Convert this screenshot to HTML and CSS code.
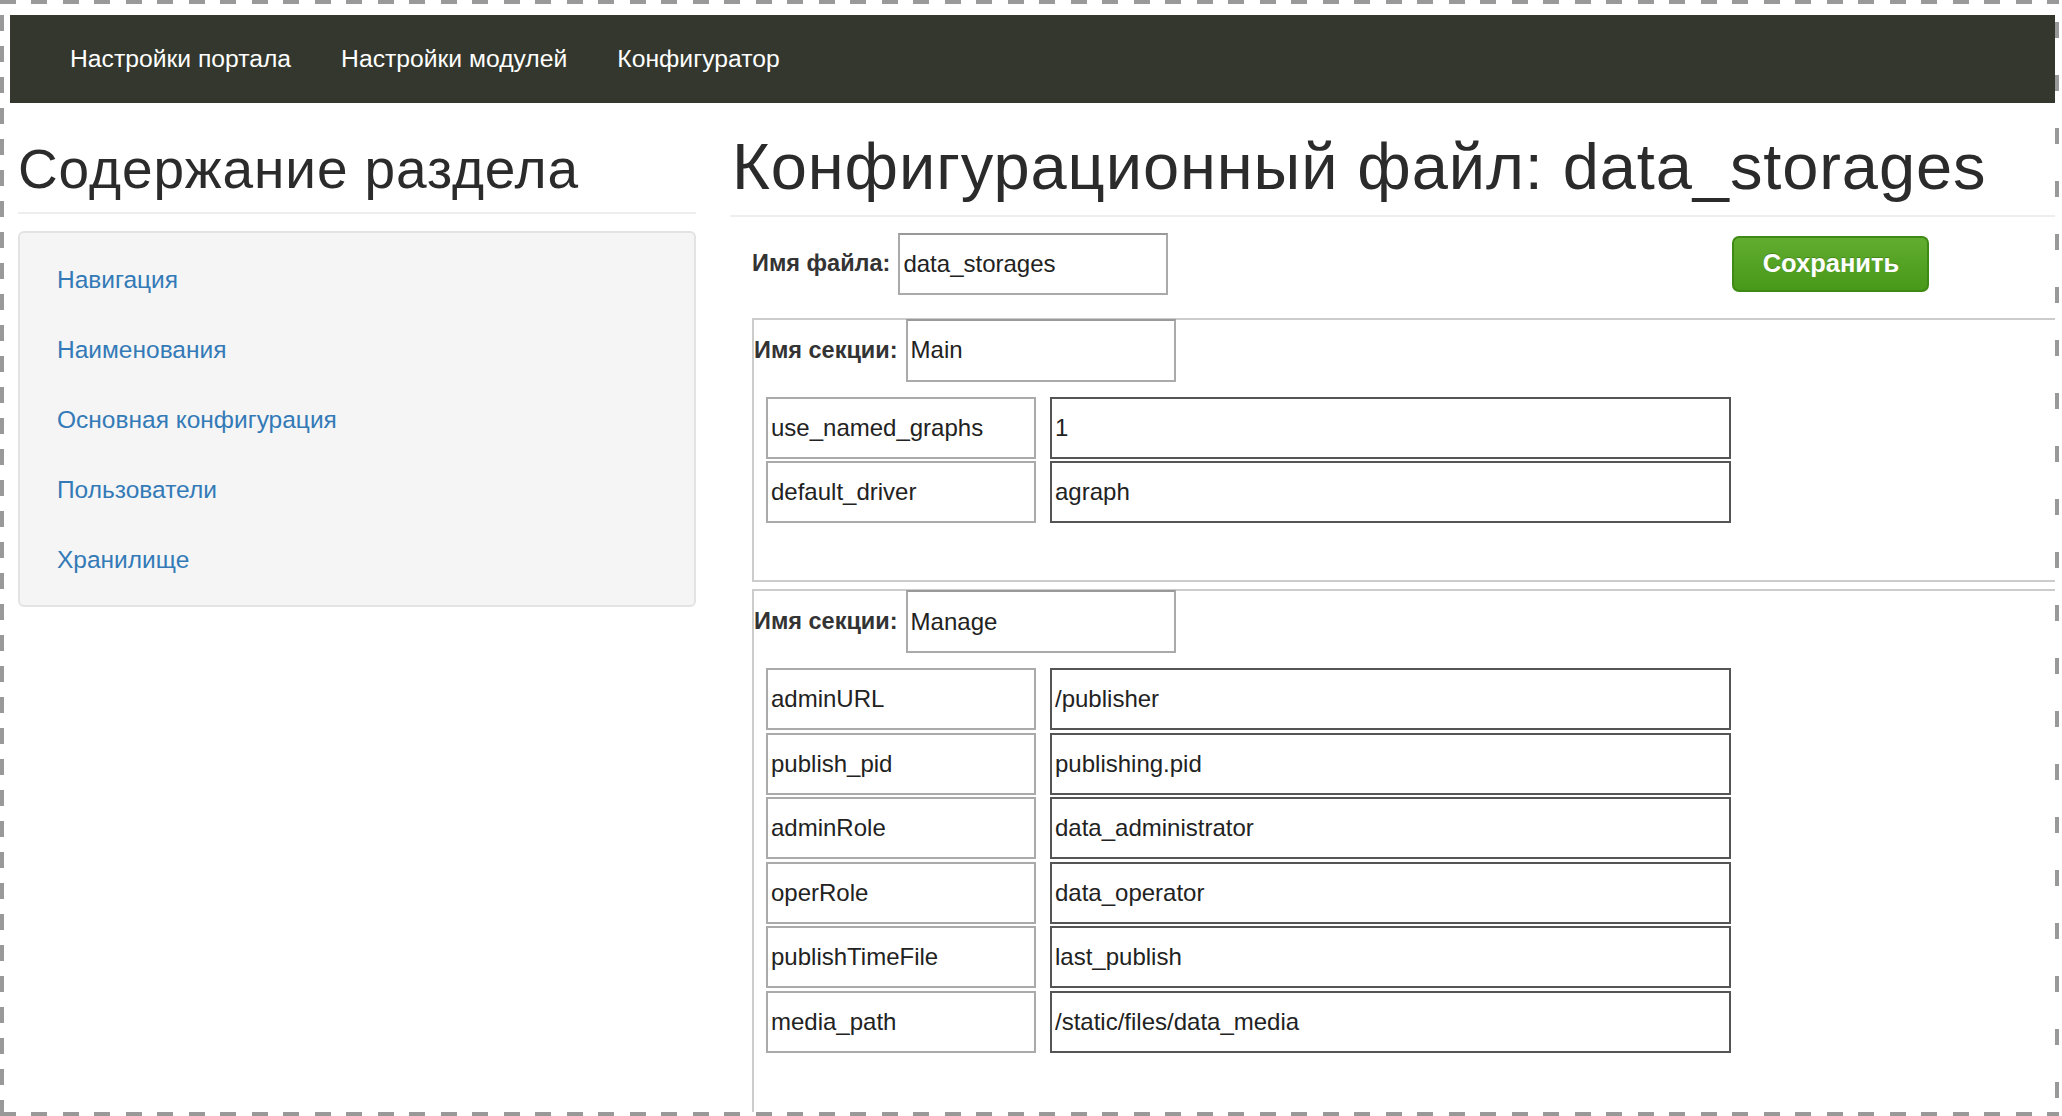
FILE: index.html
```html
<!DOCTYPE html>
<html lang="ru">
<head>
<meta charset="utf-8">
<title>Конфигуратор</title>
<link rel="stylesheet" href="styles.css">
</head>
<body>
<div class="page">
  <nav class="navbar">
    <a class="nav-link" href="#">Настройки портала</a>
    <a class="nav-link" href="#">Настройки модулей</a>
    <a class="nav-link" href="#">Конфигуратор</a>
  </nav>
  <div class="layout">
    <aside class="sidebar">
      <h2 class="page-header side-title">Содержание раздела</h2>
      <ul class="well nav-list">
        <li><a href="#">Навигация</a></li>
        <li><a href="#">Наименования</a></li>
        <li><a href="#">Основная конфигурация</a></li>
        <li><a href="#">Пользователи</a></li>
        <li><a href="#">Хранилище</a></li>
      </ul>
    </aside>
    <main class="content">
      <h1 class="page-header main-title">Конфигурационный файл: data_storages</h1>
      <form class="config-form">
        <div class="file-row">
          <label class="field-label">Имя файла:</label>
          <input class="name-input file-input" type="text" value="data_storages">
          <button class="btn-save" type="button">Сохранить</button>
        </div>
        <fieldset class="section section-main">
          <div class="section-head">
            <label class="field-label">Имя секции:</label>
            <input class="name-input" type="text" value="Main">
          </div>
          <div class="param-row"><input class="key-input" type="text" value="use_named_graphs"><input class="value-input" type="text" value="1"></div>
          <div class="param-row"><input class="key-input" type="text" value="default_driver"><input class="value-input" type="text" value="agraph"></div>
        </fieldset>
        <fieldset class="section section-manage">
          <div class="section-head">
            <label class="field-label">Имя секции:</label>
            <input class="name-input" type="text" value="Manage">
          </div>
          <div class="param-row"><input class="key-input" type="text" value="adminURL"><input class="value-input" type="text" value="/publisher"></div>
          <div class="param-row"><input class="key-input" type="text" value="publish_pid"><input class="value-input" type="text" value="publishing.pid"></div>
          <div class="param-row"><input class="key-input" type="text" value="adminRole"><input class="value-input" type="text" value="data_administrator"></div>
          <div class="param-row"><input class="key-input" type="text" value="operRole"><input class="value-input" type="text" value="data_operator"></div>
          <div class="param-row"><input class="key-input" type="text" value="publishTimeFile"><input class="value-input" type="text" value="last_publish"></div>
          <div class="param-row"><input class="key-input" type="text" value="media_path"><input class="value-input" type="text" value="/static/files/data_media"></div>
        </fieldset>
      </form>
    </main>
  </div>
</div>
</body>
</html>
```

FILE: styles.css
```css
* { box-sizing: border-box; }

html, body {
  margin: 0;
  padding: 0;
  background: #fff;
}

body {
  font-family: "Liberation Sans", Arial, Helvetica, sans-serif;
  color: #333;
}

/* outer frame with long grey dashes */
.page {
  width: 2059px;
  height: 1116px;
  border: 4px solid transparent;
  background:
    repeating-linear-gradient(to right, #999 0 16px, transparent 16px 31.5px) 0 0 / 100% 4px no-repeat border-box,
    repeating-linear-gradient(to right, #999 0 16px, transparent 16px 31.5px) 0 100% / 100% 4px no-repeat border-box,
    repeating-linear-gradient(to bottom, transparent 0 15.5px, #999 15.5px 31px) 0 0 / 4px 100% no-repeat border-box,
    repeating-linear-gradient(to bottom, transparent 0 22px, #999 22px 38px, transparent 38px 53px) 100% 0 / 4px 100% no-repeat border-box,
    #fff;
  padding: 11px 0 0 6px;
  overflow: hidden;
}

.navbar {
  height: 88px;
  background: #33372d;
  display: flex;
  align-items: center;
  padding-left: 35px;
}

.nav-link {
  color: #fff;
  text-decoration: none;
  font-size: 24.7px;
  padding: 0 25px;
}

.layout {
  display: grid;
  grid-template-columns: 678px 1340px;
  column-gap: 34px;
  align-items: start;
  padding-left: 8px;
}

.page-header {
  margin: 0;
  font-weight: 400;
  color: #2b2b2b;
  line-height: 1.1;
  border-bottom: 2px solid #eee;
}

.side-title {
  font-size: 55px;
  letter-spacing: 0.9px;
  margin-top: 36px;
  padding-bottom: 12px;
}

.main-title {
  font-size: 65px;
  letter-spacing: 0.9px;
  margin-top: 28px;
  padding-bottom: 12px;
  padding-left: 2px;
}

.well {
  margin: 17px 0 0;
  background: #f5f5f5;
  border: 2px solid #e3e3e3;
  border-radius: 6px;
  padding: 12px 0 10px;
  list-style: none;
}

.nav-list li {
  height: 70px;
  line-height: 70px;
  padding-left: 37px;
}

.nav-list a {
  color: #337ab7;
  text-decoration: none;
  font-size: 24.5px;
}

.config-form {
  margin: 0;
}

.file-row {
  display: flex;
  align-items: center;
  margin-top: 16px;
  padding-left: 22px;
}

.field-label {
  font-weight: 700;
  font-size: 23.5px;
  color: #333;
  margin-right: 8px;
}

input {
  font-family: "Liberation Sans", Arial, Helvetica, sans-serif;
  font-size: 24px;
  color: #222;
  background: #fff;
  margin: 0;
  outline: none;
}

.name-input {
  width: 270px;
  height: 63px;
  border: 2px solid #aaa;
  border-top-color: #999;
  padding: 0 3px;
}

.file-input {
  height: 62px;
}

.btn-save {
  margin-left: 564px;
  width: 197px;
  height: 56px;
  border: 2px solid #3f8a14;
  border-radius: 7px;
  background: linear-gradient(#61ad2f, #48981a);
  color: #fff;
  font-family: "Liberation Sans", Arial, Helvetica, sans-serif;
  font-weight: 700;
  font-size: 25.5px;
  text-shadow: 0 -1px 0 rgba(0,0,0,0.2);
  padding: 0;
}

.section {
  margin: 23px 0 0 22px;
  padding: 0;
  border: 2px solid #ccc;
  min-width: 0;
}

.section-main {
  padding-bottom: 56.5px;
}

.section-manage {
  margin-top: 7.5px;
  padding-bottom: 66px;
}

.section-head {
  display: flex;
  align-items: center;
  margin-top: -1px;
}

.param-row {
  display: flex;
  gap: 14px;
  margin-left: 12px;
  margin-top: 2.5px;
}

.section-head + .param-row {
  margin-top: 15px;
}

.key-input {
  width: 270px;
  height: 62px;
  border: 2px solid #aaa;
  padding: 0 3px;
}

.value-input {
  width: 681px;
  height: 62px;
  border: 2px solid #555;
  padding: 0 3px;
}
```
